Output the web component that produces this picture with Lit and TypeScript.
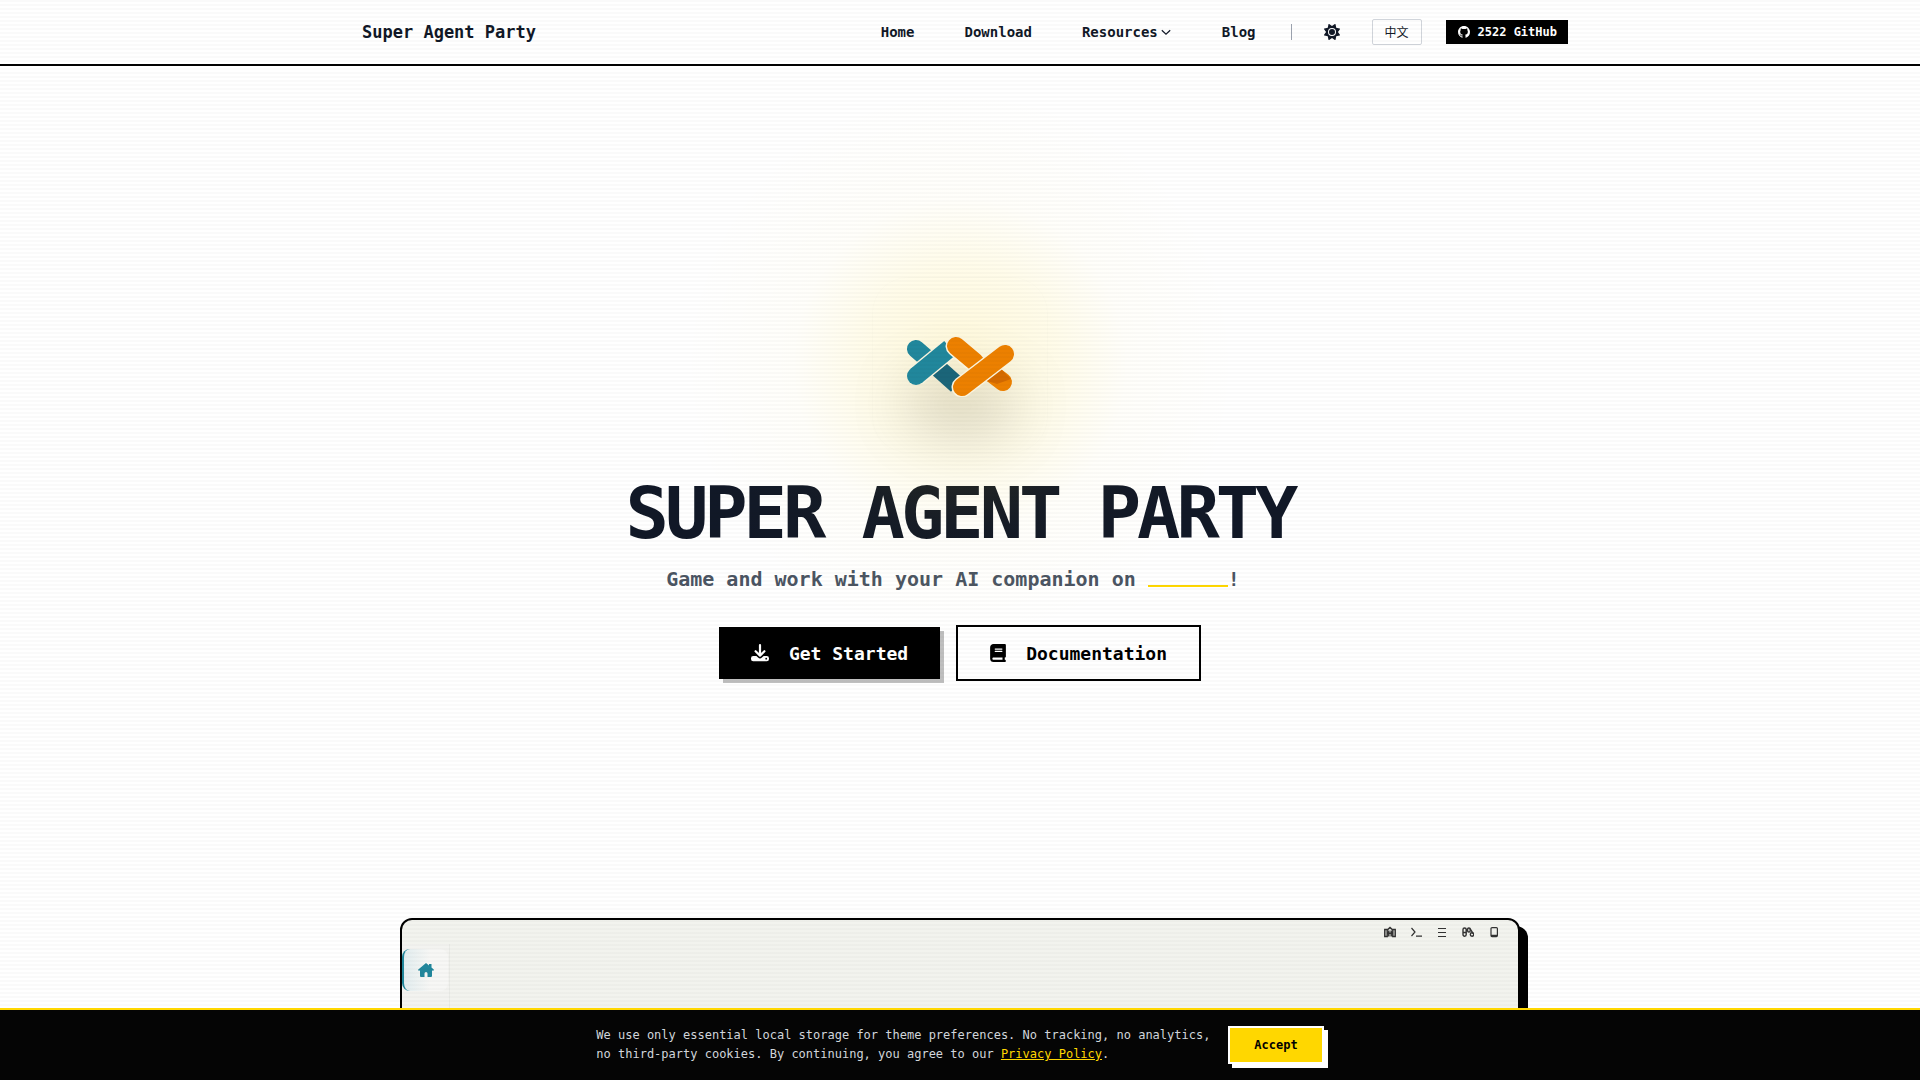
import { LitElement, html, css, svg } from "lit";
import { customElement } from "lit/decorators.js";

const icons = {
  chevron: svg`<svg viewBox="0 0 12 12" width="12" height="12" fill="none" stroke="currentColor" stroke-width="1.2"><path d="M1.8 4.2 6 8.2l4.2-4"/></svg>`,
  sun: svg`<svg viewBox="0 0 512 512" width="16" height="16" fill="currentColor"><path d="M361.5 1.2c5 2.1 8.6 6.600 9.600 11.900L391 121l107.900 19.800c5.300 1 9.800 4.600 11.900 9.600s1.500 10.700-1.600 15.200L446.900 256l62.300 90.300c3.100 4.500 3.700 10.200 1.600 15.200s-6.600 8.600-11.900 9.600L391 391 371.100 498.900c-1 5.300-4.600 9.800-9.600 11.900s-10.700 1.500-15.200-1.600L256 446.900l-90.300 62.300c-4.500 3.100-10.200 3.700-15.200 1.600s-8.600-6.600-9.600-11.900L121 391 13.100 371.100c-5.300-1-9.800-4.600-11.900-9.600s-1.500-10.700 1.600-15.200L65.100 256 2.800 165.700c-3.100-4.500-3.700-10.200-1.600-15.200s6.600-8.600 11.900-9.600L121 121 140.900 13.100c1-5.300 4.600-9.800 9.600-11.900s10.700-1.500 15.200 1.600L256 65.100 346.300 2.800c4.500-3.100 10.200-3.700 15.200-1.600zM160 256a96 96 0 1 1 192 0 96 96 0 1 1-192 0zm224 0a128 128 0 1 0-256 0 128 128 0 1 0 256 0z"/></svg>`,
  github: svg`<svg viewBox="0 0 16 16" width="12" height="12" fill="currentColor"><path d="M8 0C3.580 0 0 3.580 0 8c0 3.540 2.290 6.530 5.470 7.590.4.070.55-.17.55-.38 0-.19-.01-.82-.01-1.490-2.010.37-2.530-.49-2.690-.94-.09-.23-.48-.94-.82-1.130-.28-.15-.68-.52-.01-.53.63-.01 1.080.58 1.230.82.72 1.210 1.870.87 2.330.66.07-.52.28-.87.51-1.070-1.780-.2-3.640-.89-3.640-3.950 0-.87.31-1.590.82-2.150-.08-.2-.36-1.020.08-2.120 0 0 .67-.21 2.200.82.64-.18 1.320-.27 2-.27s1.360.09 2 .27c1.530-1.040 2.200-.82 2.200-.82.44 1.100.16 1.920.08 2.120.51.56.82 1.270.82 2.150 0 3.070-1.870 3.750-3.650 3.950.29.25.54.73.54 1.480 0 1.070-.01 1.930-.01 2.200 0 .21.15.46.55.38A8.010 8.010 0 0 0 16 8c0-4.420-3.580-8-8-8z"/></svg>`,
  download: svg`<svg viewBox="0 0 18 18" width="18" height="18" fill="none"><path d="M9 1.200v10M4.600 7.200 9 11.600l4.400-4.400" stroke="currentColor" stroke-width="2.200" stroke-linecap="round" stroke-linejoin="round"/><path d="M2.200 12h3.200l1.700 1.600a2.700 2.700 0 0 0 3.800 0l1.700-1.600h3.200A2.200 2.200 0 0 1 18 14.200v.8a2.300 2.300 0 0 1-2.200 2.300H2.200A2.300 2.300 0 0 1 0 15v-.8A2.200 2.200 0 0 1 2.200 12z" fill="currentColor"/><circle cx="15.200" cy="14.700" r=".9" fill="#000"/></svg>`,
  book: svg`<svg viewBox="0 0 448 512" width="16" height="18" fill="currentColor"><path d="M96 0C43 0 0 43 0 96v320c0 53 43 96 96 96h320c17.700 0 32-14.300 32-32s-14.300-32-32-32v-64c17.700 0 32-14.300 32-32V32c0-17.700-14.300-32-32-32H96zm0 384h256v64H96c-17.700 0-32-14.300-32-32s14.300-32 32-32zm32-240c0-8.800 7.200-16 16-16h192c8.800 0 16 7.200 16 16s-7.200 16-16 16H144c-8.800 0-16-7.200-16-16zm16 48h192c8.800 0 16 7.200 16 16s-7.200 16-16 16H144c-8.800 0-16-7.200-16-16s7.200-16 16-16z"/></svg>`,
  home: svg`<svg viewBox="0 0 16 14" width="16" height="14" fill="currentColor"><path d="M8 0 0 6.800l.9 1.100 1.100-.6V13a1 1 0 0 0 1 1h3.500v-3.600a1.500 1.500 0 0 1 3 0V14H13a1 1 0 0 0 1-1V7.300l1.100.6.9-1.100-2.500-2.200V1H11v1.500z"/></svg>`,
  castle: svg`<svg viewBox="0 0 12 12" width="12" height="12" fill="none" stroke="currentColor" stroke-width="1.500"><path d="M.8 10.500V3.500h2.400v7zM8.800 10.500v-7h2.400v7zM3.200 4 6 1.600 8.800 4M3.500 7.200h5M4.800 10.500V4.500M7.200 10.500V4.500"/></svg>`,
  terminal: svg`<svg viewBox="0 0 12 12" width="12" height="12" fill="none" stroke="currentColor" stroke-width="1.200"><path d="M1.500 2 5 6 1.500 10M6 10.200h6"/></svg>`,
  bars: svg`<svg viewBox="0 0 12 12" width="12" height="12" fill="none" stroke="currentColor" stroke-width="1.200"><path d="M2 2.500h8M2 6.500h8M2 10.500h8"/></svg>`,
  binoculars: svg`<svg viewBox="0 0 12 12" width="12" height="12" fill="none" stroke="currentColor" stroke-width="1.400"><rect x="1" y="2" width="3.200" height="8.200" rx="1.600"/><path d="M1 6.500h3.200M4.200 4.500 5.600 3M8 2.600l3.200 5"/><rect x="5.600" y="2" width="2.600" height="4" rx="1.200"/><circle cx="10" cy="8.500" r="1.700"/></svg>`,
  tablet: svg`<svg viewBox="0 0 12 12" width="12" height="12" fill="none" stroke="currentColor" stroke-width="1.200"><rect x="3" y="1.600" width="6.400" height="9" rx="1"/><path d="M3 9.300h6.400"/></svg>`,
};

const logo = svg`<svg class="logo" viewBox="-1 -1 120 64" width="120" height="64" role="img" aria-label="Super Agent Party logo">
  <g stroke-linecap="round">
    <path d="M15 15 30 28" stroke="#21879c" stroke-width="18"/>
    <path d="M37 34 56 51" stroke="#1b6579" stroke-width="18" stroke-linecap="butt"/>
    <path d="M15 42 49 14" stroke="#fbf5df" stroke-width="21" stroke-linecap="butt"/>
    <path d="M15 42 49 14" stroke="#21879c" stroke-width="18" stroke-linecap="butt"/>
    <circle cx="15" cy="42" r="9" fill="#21879c"/>
    <path d="M55 12 76 30" stroke="#fbf5df" stroke-width="21"/>
    <path d="M55 12 74 28" stroke="#ec8000" stroke-width="18"/>
    <path d="M85 35 102 48" stroke="#ec8000" stroke-width="18"/>
    <path d="M80 40 99 34l11 11-14 5-10-3z" fill="#d46a00"/>
    <path d="M61 53 104 20" stroke="#fbf5df" stroke-width="21"/>
    <path d="M61 53 104 20" stroke="#ec8000" stroke-width="18"/>
  </g>
</svg>`;

@customElement("app-root")
export class AppRoot extends LitElement {
  static styles = css`
    :host {
      display: block;
      position: relative;
      height: 100vh;
      overflow: hidden;
      background: #fff;
      color: #111827;
      font-family: "DejaVu Sans Mono", "Liberation Mono", "Noto Sans CJK SC", monospace;
    }
    * { box-sizing: border-box; }
    a { color: inherit; text-decoration: none; }
    button { font: inherit; color: inherit; margin: 0; cursor: pointer; }
    svg { display: block; flex: none; }
    .scanlines {
      position: absolute;
      inset: 0;
      z-index: 4;
      pointer-events: none;
      background: repeating-linear-gradient(0deg, transparent 0 2px, rgba(0, 0, 0, 0.02) 2px 4px);
    }
    .header { border-bottom: 2px solid #000; }
    .bar {
      display: flex;
      align-items: center;
      justify-content: space-between;
      max-width: 1280px;
      height: 64px;
      margin: 0 auto;
      padding: 0 32px 0 42px;
    }
    .brand { font-size: 17px; font-weight: 700; }
    .nav { display: flex; align-items: center; }
    .links { display: flex; align-items: center; gap: 50px; font-size: 14px; font-weight: 700; }
    .menu { display: flex; align-items: center; gap: 2px; padding: 0; border: 0; background: none; }
    .divider { width: 1px; height: 16px; margin: 0 32px 0 35px; background: #9ca3af; }
    .theme { padding: 0; border: 0; background: none; }
    .lang {
      height: 26px;
      margin: 0 24px 0 32px;
      padding: 0 12px;
      border: 1px solid #d1d5db;
      border-radius: 2px;
      background: none;
      font: 12px/24px "Noto Sans CJK SC", sans-serif;
    }
    .github {
      display: flex;
      align-items: center;
      gap: 8px;
      height: 24px;
      padding: 0 11px 0 12px;
      background: #000;
      color: #fff;
      font-size: 12px;
      font-weight: 700;
    }
    .hero { display: flex; flex-direction: column; align-items: center; padding-top: 211px; }
    .emblem {
      position: relative;
      display: grid;
      place-items: center;
      width: 176px;
      height: 176px;
      border: 1px solid rgba(0, 0, 0, 0.01);
      border-radius: 36px;
    }
    .logo { position: relative; z-index: 2; filter: drop-shadow(0 40px 28px rgba(0, 0, 0, 0.18)); }
    .glow {
      position: absolute;
      inset: -192px;
      z-index: 1;
      pointer-events: none;
      background: radial-gradient(circle closest-side, rgba(255, 210, 0, 0.15), rgba(255, 215, 0, 0.085) 35%, rgba(255, 215, 0, 0.02) 60%, transparent);
    }
    .title { margin: 24px 0 0; font-size: 72px; line-height: 72px; font-weight: 700; letter-spacing: -4px; }
    .tagline { margin: 16px 0 0; padding-right: 14px; font-size: 20px; line-height: 28px; font-weight: 700; color: #4b5563; }
    .blank { display: inline-block; width: 80px; height: 18px; border-bottom: 2px solid #ffd700; vertical-align: -1px; }
    .actions { display: flex; align-items: center; gap: 16px; margin-top: 32px; font-size: 18px; font-weight: 700; }
    .action { display: flex; align-items: center; gap: 20px; height: 52px; padding: 0 32px; }
    .primary { background: #000; color: #fff; box-shadow: 4px 4px 0 rgba(0, 0, 0, 0.25); }
    .secondary { height: 56px; border: 2px solid #000; color: #000; }
    .preview {
      max-width: 1120px;
      height: 640px;
      margin: 237px auto 0;
      border: 2px solid #000;
      border-radius: 12px;
      background: #f2f3ee;
      box-shadow: 8px 8px 0 #000;
      overflow: hidden;
    }
    .tools { display: flex; justify-content: flex-end; gap: 14px; height: 24px; padding: 6px 18px 0 0; color: #333; }
    .side { width: 48px; height: 100%; padding-top: 5px; border-right: 1px solid #e9eae6; background: #f3f3f0; }
    .tab {
      display: grid;
      place-items: center;
      width: 46px;
      height: 42px;
      padding: 0;
      border: 0;
      border-left: 2px solid #21879c;
      border-radius: 8px;
      background: linear-gradient(90deg, #e2edef, #f7f7f5 60%);
      color: #21879c;
    }
    .cookies {
      position: fixed;
      inset: auto 0 0;
      z-index: 5;
      display: flex;
      justify-content: center;
      align-items: center;
      gap: 16px;
      padding: 16px;
      border-top: 2px solid #ffd700;
      background: #050505;
      color: #d1d5db;
      font-size: 12px;
      line-height: 19px;
    }
    .notice { max-width: 616px; margin: 0; }
    .policy { color: #ffd700; text-decoration: underline; }
    .accept {
      height: 38px;
      padding: 0 24px;
      border: 2px solid #fff;
      background: #ffd700;
      color: #000;
      box-shadow: 4px 4px 0 #fff;
      font-weight: 700;
    }
  `;

  render() {
    return html`
      <header class="header">
        <div class="bar">
          <a class="brand" href="#">Super Agent Party</a>
          <nav class="nav" aria-label="Main">
            <div class="links">
              <a href="#home">Home</a>
              <a href="#download">Download</a>
              <button class="menu" aria-haspopup="true">Resources${icons.chevron}</button>
              <a href="#blog">Blog</a>
            </div>
            <span class="divider"></span>
            <button class="theme" aria-label="Toggle theme">${icons.sun}</button>
            <button class="lang" lang="zh">中文</button>
            <a class="github" href="#github">${icons.github}<span>2522 GitHub</span></a>
          </nav>
        </div>
      </header>
      <main>
        <section class="hero">
          <div class="emblem">${logo}<div class="glow"></div></div>
          <h1 class="title">SUPER AGENT PARTY</h1>
          <p class="tagline">Game and work with your AI companion on <span class="blank"></span>!</p>
          <div class="actions">
            <a class="action primary" href="#start">${icons.download}<span>Get Started</span></a>
            <a class="action secondary" href="#docs">${icons.book}<span>Documentation</span></a>
          </div>
        </section>
        <section class="preview" aria-label="App preview">
          <div class="tools">${icons.castle}${icons.terminal}${icons.bars}${icons.binoculars}${icons.tablet}</div>
          <div class="side"><button class="tab" aria-label="Home">${icons.home}</button></div>
        </section>
      </main>
      <div class="scanlines"></div>
      <aside class="cookies" aria-label="Cookie notice">
        <p class="notice">We use only essential local storage for theme preferences. No tracking, no analytics, no third-party cookies. By continuing, you agree to our <a class="policy" href="#privacy">Privacy Policy</a>.</p>
        <button class="accept">Accept</button>
      </aside>
    `;
  }
}
